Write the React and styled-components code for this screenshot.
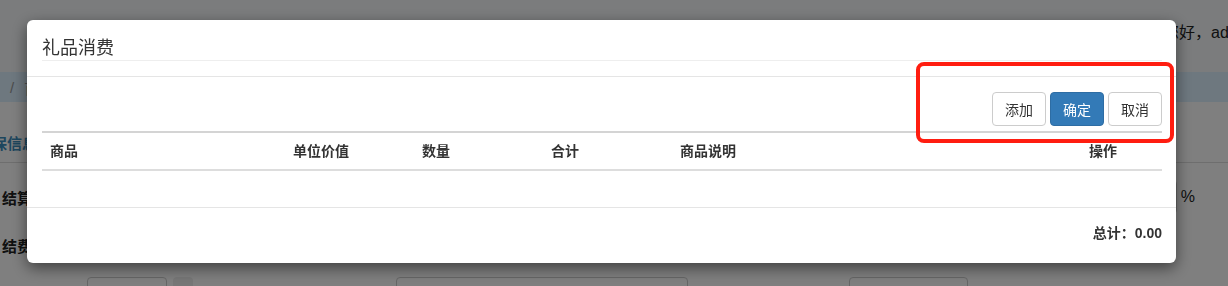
import React from 'react'
import styled, { createGlobalStyle } from 'styled-components'

const GlobalStyle = createGlobalStyle`
    html, body {
        margin: 0;
        padding: 0;
        background: #fff;
        font-family: "Liberation Sans", "Noto Sans CJK SC", sans-serif;
        font-size: 14px;
        color: #333;
    }
    * { box-sizing: border-box; }
`

const columns = [
    { label: '商品', width: 243 },
    { label: '单位价值', width: 129 },
    { label: '数量', width: 129 },
    { label: '合计', width: 129 },
    { label: '商品说明', width: 409 },
    { label: '操作', width: 81 },
]

const App = () => {
    return (
        <>
            <GlobalStyle />
            <Page>
                <TopBar>
                    <Greeting>您好，admin</Greeting>
                </TopBar>
                <Crumbs>
                    <span>/</span>
                    <span>首页</span>
                </Crumbs>
                <Panel>
                    <PanelTitle>基本保信息</PanelTitle>
                    <FormRow $top={17}>
                        <FieldLabel>结算</FieldLabel>
                        <Suffix>
                            <FakeInput $w={80} />
                            <span>%</span>
                        </Suffix>
                    </FormRow>
                    <FormRow $top={14}>
                        <FieldLabel>结费</FieldLabel>
                    </FormRow>
                    <InputsRow>
                        <FakeInput $w={80} $ml={87} />
                        <AddonBlock />
                        <FakeInput $w={292} $ml={203} />
                        <FakeInput $w={119} $ml={161} />
                    </InputsRow>
                </Panel>
            </Page>

            <Backdrop>
                <Modal>
                    <ModalHeader>
                        <ModalTitle>礼品消费</ModalTitle>
                    </ModalHeader>
                    <ModalBody>
                        <Toolbar>
                            <Btn>添加</Btn>
                            <Btn $primary>确定</Btn>
                            <Btn>取消</Btn>
                        </Toolbar>
                        <Table>
                            <colgroup>
                                {columns.map(c => (
                                    <col key={c.label} style={{ width: c.width }} />
                                ))}
                            </colgroup>
                            <thead>
                                <tr>
                                    {columns.map(c => (
                                        <Th key={c.label}>{c.label}</Th>
                                    ))}
                                </tr>
                            </thead>
                            <tbody></tbody>
                        </Table>
                    </ModalBody>
                    <ModalFooter>总计：0.00</ModalFooter>
                    <Highlight />
                </Modal>
            </Backdrop>
        </>
    )
}

export default App

const Page = styled.div`
    width: 1228px;
    height: 286px;
    overflow: hidden;
    background: #fff;
`

const TopBar = styled.div`
    height: 72px;
    background: #f6f9fb;
    display: flex;
    align-items: flex-start;
    padding: 19px 0 0 1163px;
`

const Greeting = styled.span`
    white-space: nowrap;
    font-size: 16px;
    color: #222;
`

const Crumbs = styled.div`
    height: 30px;
    background: #dcf0ff;
    display: flex;
    align-items: center;
    gap: 10px;
    padding-left: 10px;
    color: #999;
    font-size: 15px;
`

const Panel = styled.div`
    padding: 0;
`

const PanelTitle = styled.div`
    height: 61px;
    margin-left: -38px;
    padding-top: 30px;
    font-size: 15px;
    font-weight: bold;
    color: #3c8dbc;
    border-bottom: 1px solid #ddd;
    white-space: nowrap;
`

const FormRow = styled.div`
    height: 34px;
    margin-top: ${p => p.$top}px;
    display: flex;
    align-items: center;
    justify-content: space-between;
    padding-left: 2px;
`

const FieldLabel = styled.span`
    font-weight: bold;
    color: #222;
    font-size: 15px;
`

const Suffix = styled.div`
    display: flex;
    align-items: center;
    gap: 4px;
    padding-right: 33px;
    font-size: 16px;
    color: #222;
`

const FakeInput = styled.div`
    width: ${p => p.$w}px;
    height: 34px;
    margin-left: ${p => p.$ml || 0}px;
    border: 1px solid #ccc;
    border-radius: 4px;
    background: #fff;
    flex-shrink: 0;
`

const AddonBlock = styled.div`
    width: 20px;
    height: 34px;
    margin-left: 6px;
    border-radius: 4px;
    background: #eee;
`

const InputsRow = styled.div`
    display: flex;
    margin-top: 15px;
`

const Backdrop = styled.div`
    position: fixed;
    inset: 0;
    background: rgba(0, 0, 0, 0.5);
    padding: 20px 0 0 27px;
`

const Modal = styled.div`
    position: relative;
    width: 1149px;
    background: #fff;
    border-radius: 6px;
    box-shadow: 0 5px 15px rgba(0, 0, 0, 0.5);
`

const ModalHeader = styled.div`
    padding: 16px 14px 15px 15px;
    border-bottom: 1px solid #e5e5e5;
`

const ModalTitle = styled.h4`
    margin: 0;
    font-size: 18px;
    font-weight: normal;
    line-height: 24px;
    color: #333;
    border-bottom: 1px solid #eee;
`

const ModalBody = styled.div`
    padding: 15px 14px 15px 15px;
`

const Toolbar = styled.div`
    display: flex;
    justify-content: flex-end;
    gap: 4px;
    margin-bottom: 5px;
`

const Btn = styled.button`
    width: 54px;
    height: 34px;
    padding: 0;
    font-family: inherit;
    font-size: 14px;
    border-radius: 4px;
    border: 1px solid ${p => (p.$primary ? '#2e6da4' : '#ccc')};
    background: ${p => (p.$primary ? '#337ab7' : '#fff')};
    color: ${p => (p.$primary ? '#fff' : '#333')};
`

const Table = styled.table`
    width: 1120px;
    table-layout: fixed;
    border-collapse: collapse;
    border-top: 2px solid #d4d4d4;
    margin-bottom: 21px;
`

const Th = styled.th`
    text-align: left;
    font-weight: bold;
    font-size: 14px;
    line-height: 20px;
    padding: 8px;
    color: #333;
    border-bottom: 2px solid #ddd;
`

const ModalFooter = styled.div`
    border-top: 1px solid #e5e5e5;
    padding: 15px 14px 20px 15px;
    text-align: right;
    font-weight: bold;
    font-size: 14px;
    line-height: 20px;
    color: #333;
`

const Highlight = styled.div`
    position: absolute;
    left: 889px;
    top: 42px;
    width: 258px;
    height: 81px;
    border: 4px solid #ff1d10;
    border-radius: 8px;
    pointer-events: none;
`
